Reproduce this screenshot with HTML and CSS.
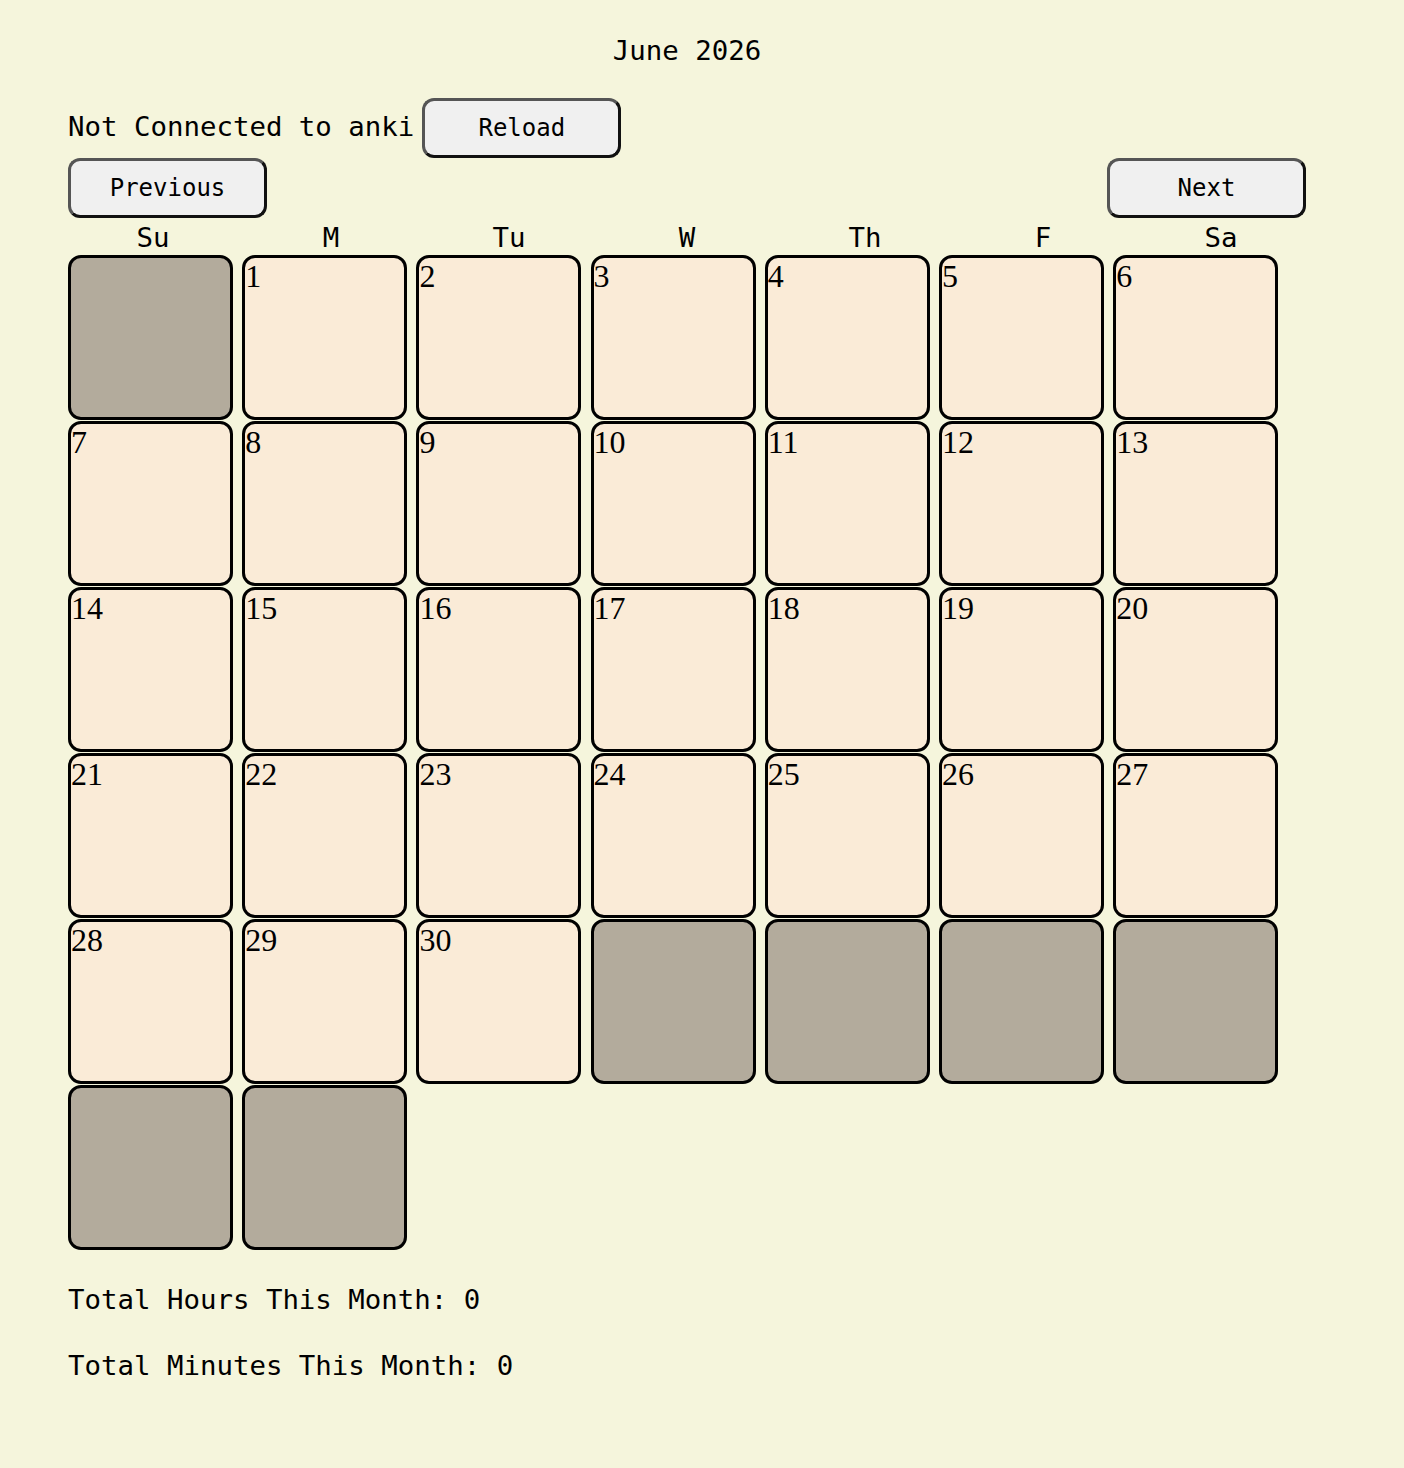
FILE: index.html
```html
<!DOCTYPE html>
<html>
<head>
  <meta charset="UTF-8">
  <title>Anki Calendar</title>
  <link rel="stylesheet" href="styles.css">
</head>
<body>
  <div class="container">
    <h1 class="month-title">June 2026</h1>

    <div class="status-row">
      <span class="status">Not Connected to anki</span>
      <button class="btn">Reload</button>
    </div>

    <div class="nav-row">
      <button class="btn">Previous</button>
      <button class="btn">Next</button>
    </div>

    <div class="weekdays">
      <div>Su</div><div>M</div><div>Tu</div><div>W</div><div>Th</div><div>F</div><div>Sa</div>
    </div>

    <div class="calendar" id="calendar"></div>

    <p class="total">Total Hours This Month: 0</p>
    <p class="total">Total Minutes This Month: 0</p>
  </div>

  <script>
    const cal = document.getElementById('calendar');
    const lead = 1, days = 30, trail = 6;
    for (let i = 0; i < lead; i++) {
      const d = document.createElement('div');
      d.className = 'day empty';
      cal.appendChild(d);
    }
    for (let n = 1; n <= days; n++) {
      const d = document.createElement('div');
      d.className = 'day';
      d.innerHTML = '<span class="num">' + n + '</span>';
      cal.appendChild(d);
    }
    for (let i = 0; i < trail; i++) {
      const d = document.createElement('div');
      d.className = 'day empty';
      cal.appendChild(d);
    }
  </script>
</body>
</html>
```

FILE: styles.css
```css
/* Reset & basic styling */
* { box-sizing: border-box; }
body {
  margin: 0;
  padding: 0;
  background: #f5f5dc;
  font-family: "DejaVu Sans Mono", "Liberation Mono", monospace;
  font-size: 27.4px;
  color: #000;
}
.container {
  margin-left: 68px;
  width: 1238px;
}
.month-title {
  margin: 35px 0 0;
  font-size: inherit;
  font-weight: normal;
  line-height: 32px;
  text-align: center;
}
/* status + reload */
.status-row {
  display: flex;
  align-items: baseline;
  gap: 8px;
  margin-top: 31px;
}
.status { line-height: 32px; }
.btn {
  width: 199px;
  height: 60px;
  padding: 0;
  font-family: "DejaVu Sans Mono", "Liberation Mono", monospace;
  font-size: 24px;
  color: #000;
  background: #f0f0f0;
  border: 3px solid;
  border-color: #555 #111 #111 #555;
  border-radius: 12px;
  cursor: pointer;
}
.btn:hover { background: #e6e6e6; }
.nav-row {
  display: flex;
  justify-content: space-between;
}
/* weekday header */
.weekdays {
  display: grid;
  grid-template-columns: repeat(7, 178px);
  margin-left: -4px;
  padding-top: 3px;
  line-height: 34px;
  text-align: center;
}
/* month grid */
.calendar {
  display: grid;
  grid-template-columns: repeat(7, 165px);
  grid-auto-rows: 165px;
  column-gap: 9.2px;
  row-gap: 1px;
}
.day {
  background: #faebd7;
  border: 3px solid #000;
  border-radius: 13px;
  font-family: "Liberation Serif", "Times New Roman", serif;
  font-size: 32px;
}
.day.empty { background: #b3ab9c; }
.total {
  margin: 34px 0 0;
  line-height: 32px;
}
```
